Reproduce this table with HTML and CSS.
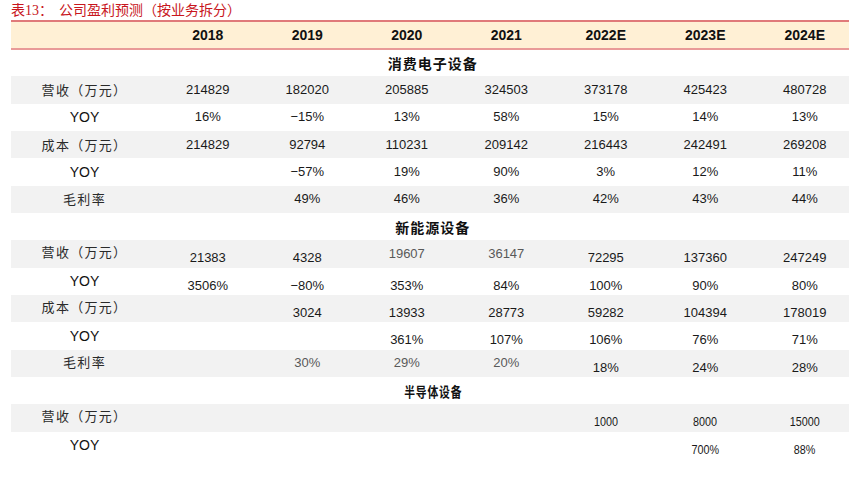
FILE: index.html
```html
<!DOCTYPE html>
<html lang="zh">
<head>
<meta charset="utf-8">
<title>公司盈利预测</title>
<link rel="stylesheet" href="styles.css">
</head>
<body>
<div class="page">
  <div class="caption"><span class="cap-no">表13：</span><span class="cap-text">公司盈利预测（按业务拆分）</span></div>
  <table class="forecast">
    <colgroup>
      <col class="c-label">
      <col class="c-data"><col class="c-data"><col class="c-data"><col class="c-data"><col class="c-data"><col class="c-data"><col class="c-data">
    </colgroup>
    <thead>
      <tr class="head">
        <th></th><th>2018</th><th>2019</th><th>2020</th><th>2021</th><th>2022E</th><th>2023E</th><th>2024E</th>
      </tr>
    </thead>
    <tbody>
      <tr class="sec"><td colspan="8">消费电子设备</td></tr>
      <tr class="g"><td class="lab">营收（万元）</td><td>214829</td><td>182020</td><td>205885</td><td>324503</td><td>373178</td><td>425423</td><td>480728</td></tr>
      <tr><td class="lab en">YOY</td><td>16%</td><td>−15%</td><td>13%</td><td>58%</td><td>15%</td><td>14%</td><td>13%</td></tr>
      <tr class="g"><td class="lab">成本（万元）</td><td>214829</td><td>92794</td><td>110231</td><td>209142</td><td>216443</td><td>242491</td><td>269208</td></tr>
      <tr><td class="lab en">YOY</td><td></td><td>−57%</td><td>19%</td><td>90%</td><td>3%</td><td>12%</td><td>11%</td></tr>
      <tr class="g"><td class="lab">毛利率</td><td></td><td>49%</td><td>46%</td><td>36%</td><td>42%</td><td>43%</td><td>44%</td></tr>

      <tr class="sec"><td colspan="8">新能源设备</td></tr>
      <tr class="g"><td class="lab up">营收（万元）</td><td class="lo">21383</td><td class="lo">4328</td><td class="dim">19607</td><td class="dim">36147</td><td class="lo">72295</td><td class="lo">137360</td><td class="lo">247249</td></tr>
      <tr><td class="lab en">YOY</td><td class="lo">3506%</td><td class="lo">−80%</td><td class="lo">353%</td><td class="lo">84%</td><td class="lo">100%</td><td class="lo">90%</td><td class="lo">80%</td></tr>
      <tr class="g"><td class="lab up">成本（万元）</td><td></td><td class="lo">3024</td><td class="lo">13933</td><td class="lo">28773</td><td class="lo">59282</td><td class="lo">104394</td><td class="lo">178019</td></tr>
      <tr><td class="lab en">YOY</td><td></td><td></td><td class="lo">361%</td><td class="lo">107%</td><td class="lo">106%</td><td class="lo">76%</td><td class="lo">71%</td></tr>
      <tr class="g"><td class="lab up">毛利率</td><td></td><td class="dim">30%</td><td class="dim">29%</td><td class="dim">20%</td><td class="lo">18%</td><td class="lo">24%</td><td class="lo">28%</td></tr>

      <tr class="sec"><td colspan="8"><span class="cond">半导体设备</span></td></tr>
      <tr class="g"><td class="lab up">营收（万元）</td><td></td><td></td><td></td><td></td><td class="lo"><span class="cond">1000</span></td><td class="lo"><span class="cond">8000</span></td><td class="lo"><span class="cond">15000</span></td></tr>
      <tr><td class="lab en">YOY</td><td></td><td></td><td></td><td></td><td></td><td class="lo"><span class="cond">700%</span></td><td class="lo"><span class="cond">88%</span></td></tr>
    </tbody>
  </table>
</div>
</body>
</html>
```

FILE: styles.css
```css
html, body {
  margin: 0;
  padding: 0;
  background: #ffffff;
  overflow: hidden;
}

.page {
  width: 849px;
  height: 485px;
  overflow: hidden;
}

.caption {
  height: 19px;
  padding-top: 1px;
  padding-left: 11px;
  color: #c8161d;
  font-size: 14px;
  line-height: 17px;
  white-space: nowrap;
}

.cap-no {
  font-family: "Liberation Serif", "Noto Sans CJK SC", serif;
}

.cap-text {
  margin-left: 6px;
  font-family: "Noto Sans CJK SC", sans-serif;
  font-weight: 400;
}

.forecast {
  margin-left: 11px;
  border-collapse: collapse;
  table-layout: fixed;
  width: 843.5px;
  font-family: "Liberation Sans", Arial, sans-serif;
  font-size: 13px;
  color: #1a1a1a;
}

.c-label { width: 147px; }
.c-data { width: 99.5px; }

.forecast td,
.forecast th {
  padding: 0;
  text-align: center;
  vertical-align: middle;
  white-space: nowrap;
  line-height: 16px;
}

.head th {
  height: 26px;
  background: #fff0d5;
  border-top: 2px solid #e07a7a;
  border-bottom: 2px solid #e99a98;
  font-size: 14px;
  font-weight: 700;
  color: #111;
}

.forecast tbody tr {
  height: 27.33px;
}

.g td {
  background: #f2f2f2;
}

.sec td {
  font-family: "Noto Sans CJK SC", sans-serif;
  font-weight: 700;
  font-size: 14px;
  letter-spacing: 1px;
  color: #111;
}

.lab {
  font-family: "Noto Sans CJK SC", sans-serif;
  font-weight: 400;
  font-size: 13px;
  letter-spacing: 1.3px;
  color: #2a2a2a;
}

.forecast td.lab.up {
  padding-bottom: 3px;
}

.lab.en {
  font-family: "Liberation Sans", Arial, sans-serif;
  font-weight: 400;
  font-size: 14px;
  letter-spacing: 0;
  color: #111;
}

.forecast td.lo {
  padding-top: 9px;
}

.dim {
  color: #595959;
}

.cond {
  display: inline-block;
  font-size: 13.5px;
  transform: scaleX(0.8);
}
```
